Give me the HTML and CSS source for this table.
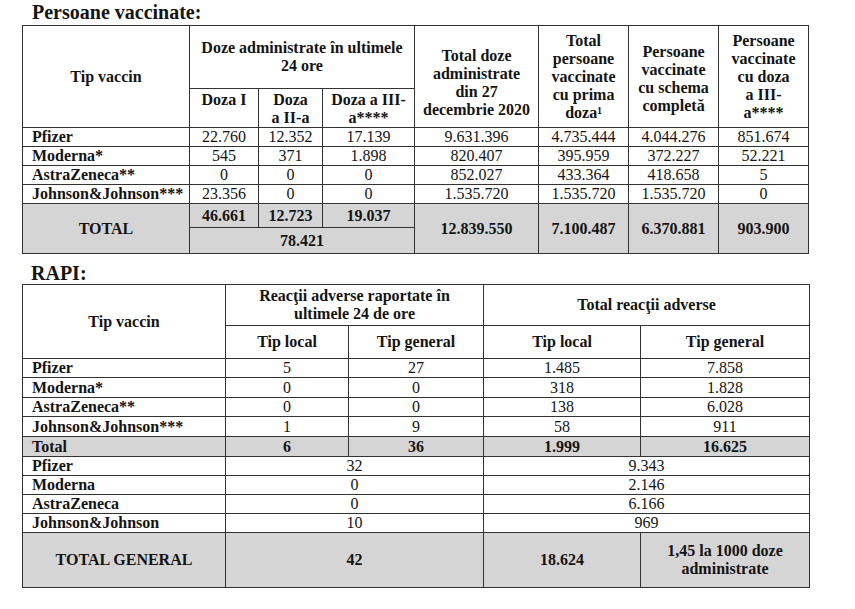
FILE: index.html
```html
<!DOCTYPE html>
<html lang="ro">
<head>
<meta charset="utf-8">
<title>Persoane vaccinate</title>
<link rel="stylesheet" href="styles.css">
</head>
<body>
<div class="page">
  <h2 class="title first">Persoane vaccinate:</h2>
  <table class="grid t1">
    <colgroup>
      <col class="c167"><col class="c69"><col class="c64"><col class="c92"><col class="c124"><col class="c90"><col class="c90"><col class="c90">
    </colgroup>
    <tr class="h63">
      <th rowspan="2">Tip vaccin</th>
      <th colspan="3">Doze administrate în ultimele<br>24 ore</th>
      <th rowspan="2" class="low">Total doze<br>administrate<br>din 27<br>decembrie 2020</th>
      <th rowspan="2">Total<br>persoane<br>vaccinate<br>cu prima<br>doza¹</th>
      <th rowspan="2" class="low2">Persoane<br>vaccinate<br>cu schema<br>completă</th>
      <th rowspan="2">Persoane<br>vaccinate<br>cu doza<br>a III-<br>a****</th>
    </tr>
    <tr class="h38">
      <th class="top">Doza I</th>
      <th class="top">Doza<br>a II-a</th>
      <th class="top">Doza a III-<br>a****</th>
    </tr>
    <tr class="h19">
      <th class="lbl">Pfizer</th><td>22.760</td><td>12.352</td><td>17.139</td><td>9.631.396</td><td>4.735.444</td><td>4.044.276</td><td>851.674</td>
    </tr>
    <tr class="h19">
      <th class="lbl">Moderna*</th><td>545</td><td>371</td><td>1.898</td><td>820.407</td><td>395.959</td><td>372.227</td><td>52.221</td>
    </tr>
    <tr class="h19">
      <th class="lbl">AstraZeneca**</th><td>0</td><td>0</td><td>0</td><td>852.027</td><td>433.364</td><td>418.658</td><td>5</td>
    </tr>
    <tr class="h19">
      <th class="lbl">Johnson&amp;Johnson***</th><td>23.356</td><td>0</td><td>0</td><td>1.535.720</td><td>1.535.720</td><td>1.535.720</td><td>0</td>
    </tr>
    <tr class="h24 gray">
      <th rowspan="2">TOTAL</th><th>46.661</th><th>12.723</th><th>19.037</th>
      <th rowspan="2">12.839.550</th><th rowspan="2">7.100.487</th><th rowspan="2">6.370.881</th><th rowspan="2">903.900</th>
    </tr>
    <tr class="h26 gray">
      <th colspan="3">78.421</th>
    </tr>
  </table>

  <h2 class="title second">RAPI:</h2>
  <table class="grid t2">
    <colgroup>
      <col class="c203"><col class="c123"><col class="c135"><col class="c157"><col class="c168">
    </colgroup>
    <tr class="h41">
      <th rowspan="2">Tip vaccin</th>
      <th colspan="2">Reacţii adverse raportate în<br>ultimele 24 de ore</th>
      <th colspan="2">Total reacţii adverse</th>
    </tr>
    <tr class="h33">
      <th>Tip local</th><th>Tip general</th><th>Tip local</th><th>Tip general</th>
    </tr>
    <tr class="h19">
      <th class="lbl">Pfizer</th><td>5</td><td>27</td><td>1.485</td><td>7.858</td>
    </tr>
    <tr class="h20">
      <th class="lbl">Moderna*</th><td>0</td><td>0</td><td>318</td><td>1.828</td>
    </tr>
    <tr class="h19">
      <th class="lbl">AstraZeneca**</th><td>0</td><td>0</td><td>138</td><td>6.028</td>
    </tr>
    <tr class="h20">
      <th class="lbl">Johnson&amp;Johnson***</th><td>1</td><td>9</td><td>58</td><td>911</td>
    </tr>
    <tr class="h20 gray">
      <th class="lbl">Total</th><th>6</th><th>36</th><th>1.999</th><th>16.625</th>
    </tr>
    <tr class="h19">
      <th class="lbl">Pfizer</th><td colspan="2">32</td><td colspan="2">9.343</td>
    </tr>
    <tr class="h19">
      <th class="lbl">Moderna</th><td colspan="2">0</td><td colspan="2">2.146</td>
    </tr>
    <tr class="h19">
      <th class="lbl">AstraZeneca</th><td colspan="2">0</td><td colspan="2">6.166</td>
    </tr>
    <tr class="h19">
      <th class="lbl">Johnson&amp;Johnson</th><td colspan="2">10</td><td colspan="2">969</td>
    </tr>
    <tr class="h55 gray">
      <th>TOTAL GENERAL</th><th colspan="2">42</th><th>18.624</th><th>1,45 la 1000 doze<br>administrate</th>
    </tr>
  </table>
</div>
</body>
</html>
```

FILE: styles.css
```css
html, body {
  margin: 0;
  padding: 0;
  background: #ffffff;
}

body {
  font-family: "Liberation Serif", "Times New Roman", serif;
  color: #141414;
}

.page {
  padding-left: 22px;
  width: 787px;
}

.title {
  margin: 0;
  padding-left: 10px;
  font-size: 20px;
  font-weight: bold;
  line-height: 22px;
}

.title.first {
  margin-top: 1px;
  margin-bottom: 2px;
}

.title.second {
  margin-top: 8px;
  margin-bottom: 0;
  padding-left: 9px;
}

.grid {
  border-collapse: collapse;
  table-layout: fixed;
  width: 787px;
}

.grid th,
.grid td {
  border: 1px solid #333333;
  padding: 0 3px;
  font-size: 16px;
  line-height: 18px;
  text-align: center;
  vertical-align: middle;
  overflow: hidden;
  white-space: nowrap;
}

.grid th {
  font-weight: bold;
}

.grid td {
  font-weight: normal;
}

.grid th.top {
  vertical-align: top;
  padding-top: 2px;
}

.grid th.low {
  padding-top: 13px;
}

.grid th.low2 {
  padding-top: 4px;
}

.grid th.lbl {
  text-align: left;
  padding-left: 9px;
}

.gray th,
.gray td {
  background: #d5d5d5;
}

.c167 { width: 167px; }
.c69 { width: 69px; }
.c64 { width: 64px; }
.c92 { width: 92px; }
.c124 { width: 124px; }
.c90 { width: 90px; }
.c203 { width: 203px; }
.c123 { width: 123px; }
.c135 { width: 135px; }
.c157 { width: 157px; }
.c168 { width: 169px; }

.h63 { height: 63px; }
.h38 { height: 38px; }
.h19 { height: 19px; }
.h20 { height: 20px; }
.h24 { height: 24px; }
.h26 { height: 26px; }
.h27 { height: 27px; }
.h41 { height: 41px; }
.h33 { height: 33px; }
.h55 { height: 55px; }
.h56 { height: 56px; }
```
